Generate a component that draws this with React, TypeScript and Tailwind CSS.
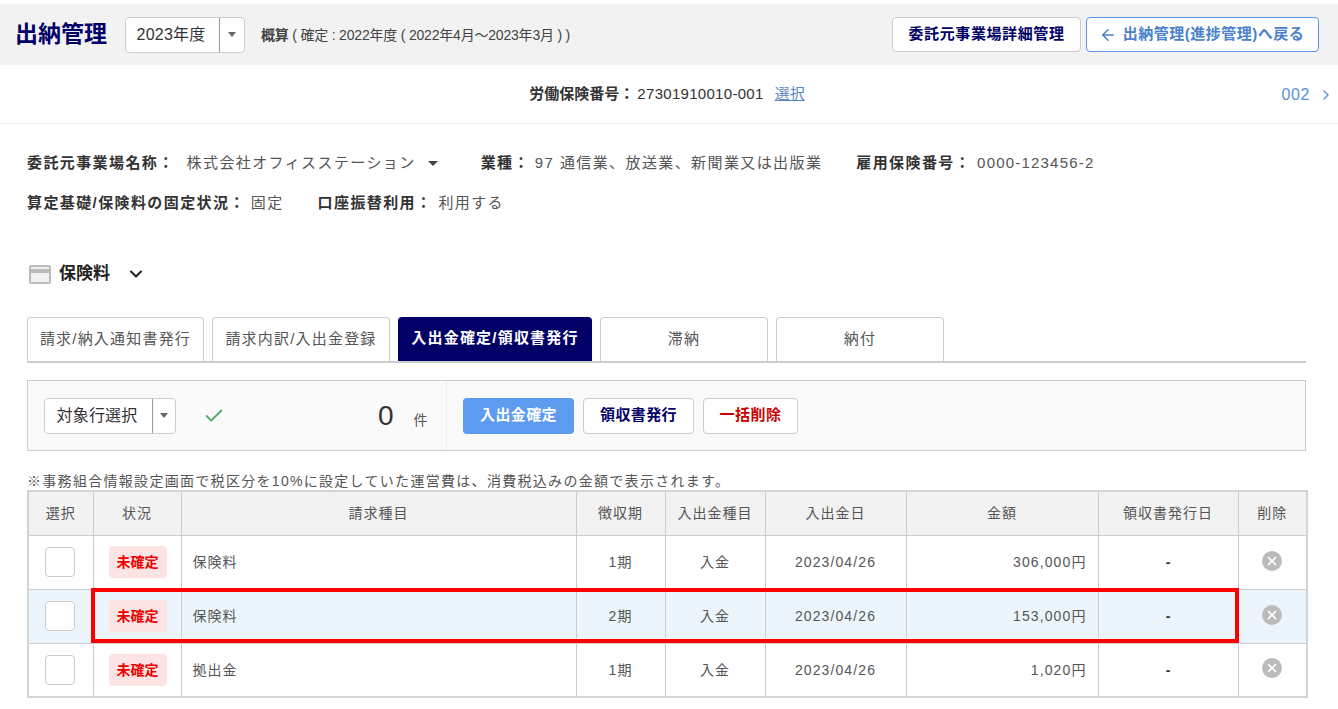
import { ArrowLeft, Check, ChevronDown, ChevronRight, X } from 'lucide-react'

const font = "font-['Liberation_Sans','Noto_Sans_CJK_JP',sans-serif]"

const rows = [
  { name: '保険料', term: '1期', amount: '306,000円' },
  { name: '保険料', term: '2期', amount: '153,000円', active: true },
  { name: '拠出金', term: '1期', amount: '1,020円' },
]

const tabs = [
  { label: '請求/納入通知書発行', w: 'w-[177px]' },
  { label: '請求内訳/入出金登録', w: 'w-[178px]' },
  { label: '入出金確定/領収書発行', w: 'w-[194px]', active: true },
  { label: '滞納', w: 'w-[168px]' },
  { label: '納付', w: 'w-[168px]' },
]

function SelectBox({ label, w, textW }: { label: string; w: string; textW: string }) {
  return (
    <div className={`flex h-[36px] ${w} items-stretch rounded border border-[#cccccc] bg-white`}>
      <div className={`flex ${textW} items-center justify-center border-r border-[#999999] pr-[3px] text-base tracking-[0.2px] text-[#333333]`}>{label}</div>
      <div className="flex flex-1 items-center justify-center">
        <div className="h-0 w-0 border-x-[4.5px] border-t-[5px] border-x-transparent border-t-[#666666]" />
      </div>
    </div>
  )
}

export default function App() {
  return (
    <div className={`${font} relative h-[709px] w-[1338px] overflow-hidden bg-white pt-1 text-[#333333]`}>
      {/* Header */}
      <div className="flex h-[61px] items-center bg-[#f2f2f2] pl-[15px] pr-[19px]">
        <h1 className="w-[93px] text-[23px] font-bold text-[#000066]">出納管理</h1>
        <div className="ml-[17px]">
          <SelectBox label="2023年度" w="w-[120px]" textW="w-[94px]" />
        </div>
        <p className="ml-[16px] text-sm tracking-[-0.2px] text-[#444444]">
          <span className="font-bold">概算</span> ( 確定 : 2022年度 ( 2022年4月～2023年3月 ) )
        </p>
        <button className="ml-auto flex h-[35px] w-[189px] items-center justify-center rounded border border-[#cccccc] bg-white text-[15px] font-bold tracking-[0.6px] text-[#000066]">
          委託元事業場詳細管理
        </button>
        <button className="ml-[5px] flex h-[35px] w-[233px] items-center justify-center gap-1.5 rounded border border-[#5a96e3] bg-white pr-[2px] text-[15px] font-bold tracking-[0.5px] text-[#4a80cc]">
          <ArrowLeft size={18} strokeWidth={2} />
          出納管理(進捗管理)へ戻る
        </button>
      </div>

      {/* 労働保険番号 */}
      <div className="relative flex h-[59px] items-center justify-center border-b border-[#eeeeee] pr-[4px] text-[15px]">
        <span className="font-bold">労働保険番号：</span>
        <span className="ml-[3px] tracking-[0.3px]">27301910010-001</span>
        <a className="ml-[11px] text-[#5a88c0] underline">選択</a>
        <div className="absolute right-[4px] top-[18px] flex items-center gap-[8px] text-base tracking-[0.6px] text-[#5a8fdc]">
          002
          <ChevronRight size={16} strokeWidth={2} />
        </div>
      </div>

      {/* Office info */}
      <div className="px-[27px] pt-[29px] text-[15px] tracking-[1.4px]">
        <div className="flex h-5 items-center">
          <span className="font-bold">委託元事業場名称：</span>
          <span className="ml-[12px] text-[#555555]">株式会社オフィスステーション</span>
          <div className="ml-[12px] h-0 w-0 border-x-[5px] border-t-[5px] border-x-transparent border-t-[#444444]" />
          <span className="ml-[43px] font-bold">業種：</span>
          <span className="ml-[5px] text-[#555555]">97 通信業、放送業、新聞業又は出版業</span>
          <span className="ml-[34px] font-bold">雇用保険番号：</span>
          <span className="ml-[6px] tracking-[1.2px] text-[#555555]">0000-123456-2</span>
        </div>
        <div className="mt-[20px] flex h-5 items-center">
          <span className="font-bold">算定基礎/保険料の固定状況：</span>
          <span className="ml-[5px] text-[#555555]">固定</span>
          <span className="ml-[34px] font-bold">口座振替利用：</span>
          <span className="ml-[6px] text-[#555555]">利用する</span>
        </div>
      </div>

      {/* Section title */}
      <div className="mt-[49px] flex h-6 items-center pl-[29px]">
        <svg width="22" height="19" viewBox="0 0 22 19" fill="none">
          <rect x="1" y="1" width="20" height="17" rx="1.5" fill="#f2f2f2" stroke="#bbbbbb" strokeWidth="2" />
          <rect x="1" y="4" width="20" height="4" fill="#bbbbbb" />
        </svg>
        <span className="ml-[8px] text-[17px] font-bold text-[#222222]">保険料</span>
        <ChevronDown size={20} strokeWidth={2.5} className="ml-[16px] text-[#222222]" />
      </div>

      {/* Tabs */}
      <div className="mx-[27px] mt-[31px] flex h-[46px] w-[1279px] items-end gap-[8px] border-b-2 border-[#cccccc]">
        {tabs.map(t => (
          <div
            key={t.label}
            className={
              t.active
                ? `flex h-[44px] ${t.w} items-center justify-center rounded-t bg-[#000066] pb-[1px] text-[15px] font-bold tracking-[1.2px] text-white`
                : `flex h-[44px] ${t.w} items-center justify-center rounded-t border border-b-0 border-[#cccccc] bg-white pb-[1px] text-[15px] tracking-[1.2px] text-[#555555]`
            }
          >
            {t.label}
          </div>
        ))}
      </div>

      {/* Action bar */}
      <div className="mx-[27px] mt-[17px] flex h-[71px] w-[1279px] border border-[#cccccc] bg-[#fafafa]">
        <div className="flex w-[419px] items-center border-r border-[#eeeeee] pl-[16px]">
          <SelectBox label="対象行選択" w="w-[132px]" textW="w-[108px]" />
          <Check size={22} strokeWidth={2} className="ml-[27px] text-[#55aa66]" />
          <span className="ml-[153px] text-[28px] text-[#333333]">0</span>
          <span className="ml-[20px] mt-[8px] text-sm text-[#555555]">件</span>
        </div>
        <div className="flex items-center pl-[16px]">
          <button className="flex h-[36px] w-[111px] items-center justify-center rounded bg-[#5c9bef] text-[15px] font-bold tracking-[0.4px] text-white">入出金確定</button>
          <button className="ml-[9px] flex h-[36px] w-[111px] items-center justify-center rounded border border-[#cccccc] bg-white text-[15px] font-bold tracking-[0.4px] text-[#000066]">領収書発行</button>
          <button className="ml-[9px] flex h-[36px] w-[95px] items-center justify-center rounded border border-[#cccccc] bg-white text-[15px] font-bold tracking-[0.5px] text-[#cc0000]">一括削除</button>
        </div>
      </div>

      <p className="ml-[27px] mt-[20px] h-[19px] text-sm leading-[20px] tracking-[1.3px] text-[#555555]">
        ※事務組合情報設定画面で税区分を10%に設定していた運営費は、消費税込みの金額で表示されます。
      </p>

      {/* Table */}
      <table className="ml-[27px] w-[1279px] table-fixed border-collapse border-2 border-[#d4d4d4] text-sm text-[#555555]">
        <colgroup>
          <col className="w-[65px]" />
          <col className="w-[88px]" />
          <col className="w-[395px]" />
          <col className="w-[89px]" />
          <col className="w-[100px]" />
          <col className="w-[141px]" />
          <col className="w-[192px]" />
          <col className="w-[140px]" />
          <col className="w-[69px]" />
        </colgroup>
        <thead>
          <tr className="h-[44px] bg-[#f2f2f2] text-sm tracking-[1px]">
            {['選択', '状況', '請求種目', '徴収期', '入出金種目', '入出金日', '金額', '領収書発行日', '削除'].map(h => (
              <th key={h} className="border border-[#cccccc] font-normal">{h}</th>
            ))}
          </tr>
        </thead>
        <tbody>
          {rows.map((r, i) => (
            <tr key={i} className={r.active ? 'h-[54px] bg-[#ecf5fc]' : 'h-[54px] bg-white'}>
              <td className="border border-[#cccccc]">
                <div className="ml-[16px] h-[30px] w-[30px] rounded border border-[#cccccc] bg-white" />
              </td>
              <td className="border border-[#cccccc]">
                <div className="ml-[15px] flex h-[32px] w-[58px] items-center justify-center rounded bg-[#fce4e4] text-sm font-bold text-[#ee0000]">未確定</div>
              </td>
              <td className="border border-[#cccccc] pl-[11px] tracking-[1px]">{r.name}</td>
              <td className="border border-[#cccccc] text-center tracking-[1px]">{r.term}</td>
              <td className="border border-[#cccccc] text-center tracking-[1px]">入金</td>
              <td className="border border-[#cccccc] text-center tracking-[1.1px]">2023/04/26</td>
              <td className="border border-[#cccccc] pr-[11px] text-right tracking-[1.1px]">{r.amount}</td>
              <td className="border border-[#cccccc] text-center font-bold text-[#333333]">-</td>
              <td className="border border-[#cccccc]">
                <div className="mx-auto mb-[3px] flex h-5 w-5 items-center justify-center rounded-full bg-[#bbbbbb]">
                  <X size={14} strokeWidth={3} className="text-white" />
                </div>
              </td>
            </tr>
          ))}
        </tbody>
      </table>

      {/* Highlight annotation */}
      <div className="pointer-events-none absolute left-[91px] top-[588px] h-[55px] w-[1148px] border-4 border-[#ff0000]" />
    </div>
  )
}
